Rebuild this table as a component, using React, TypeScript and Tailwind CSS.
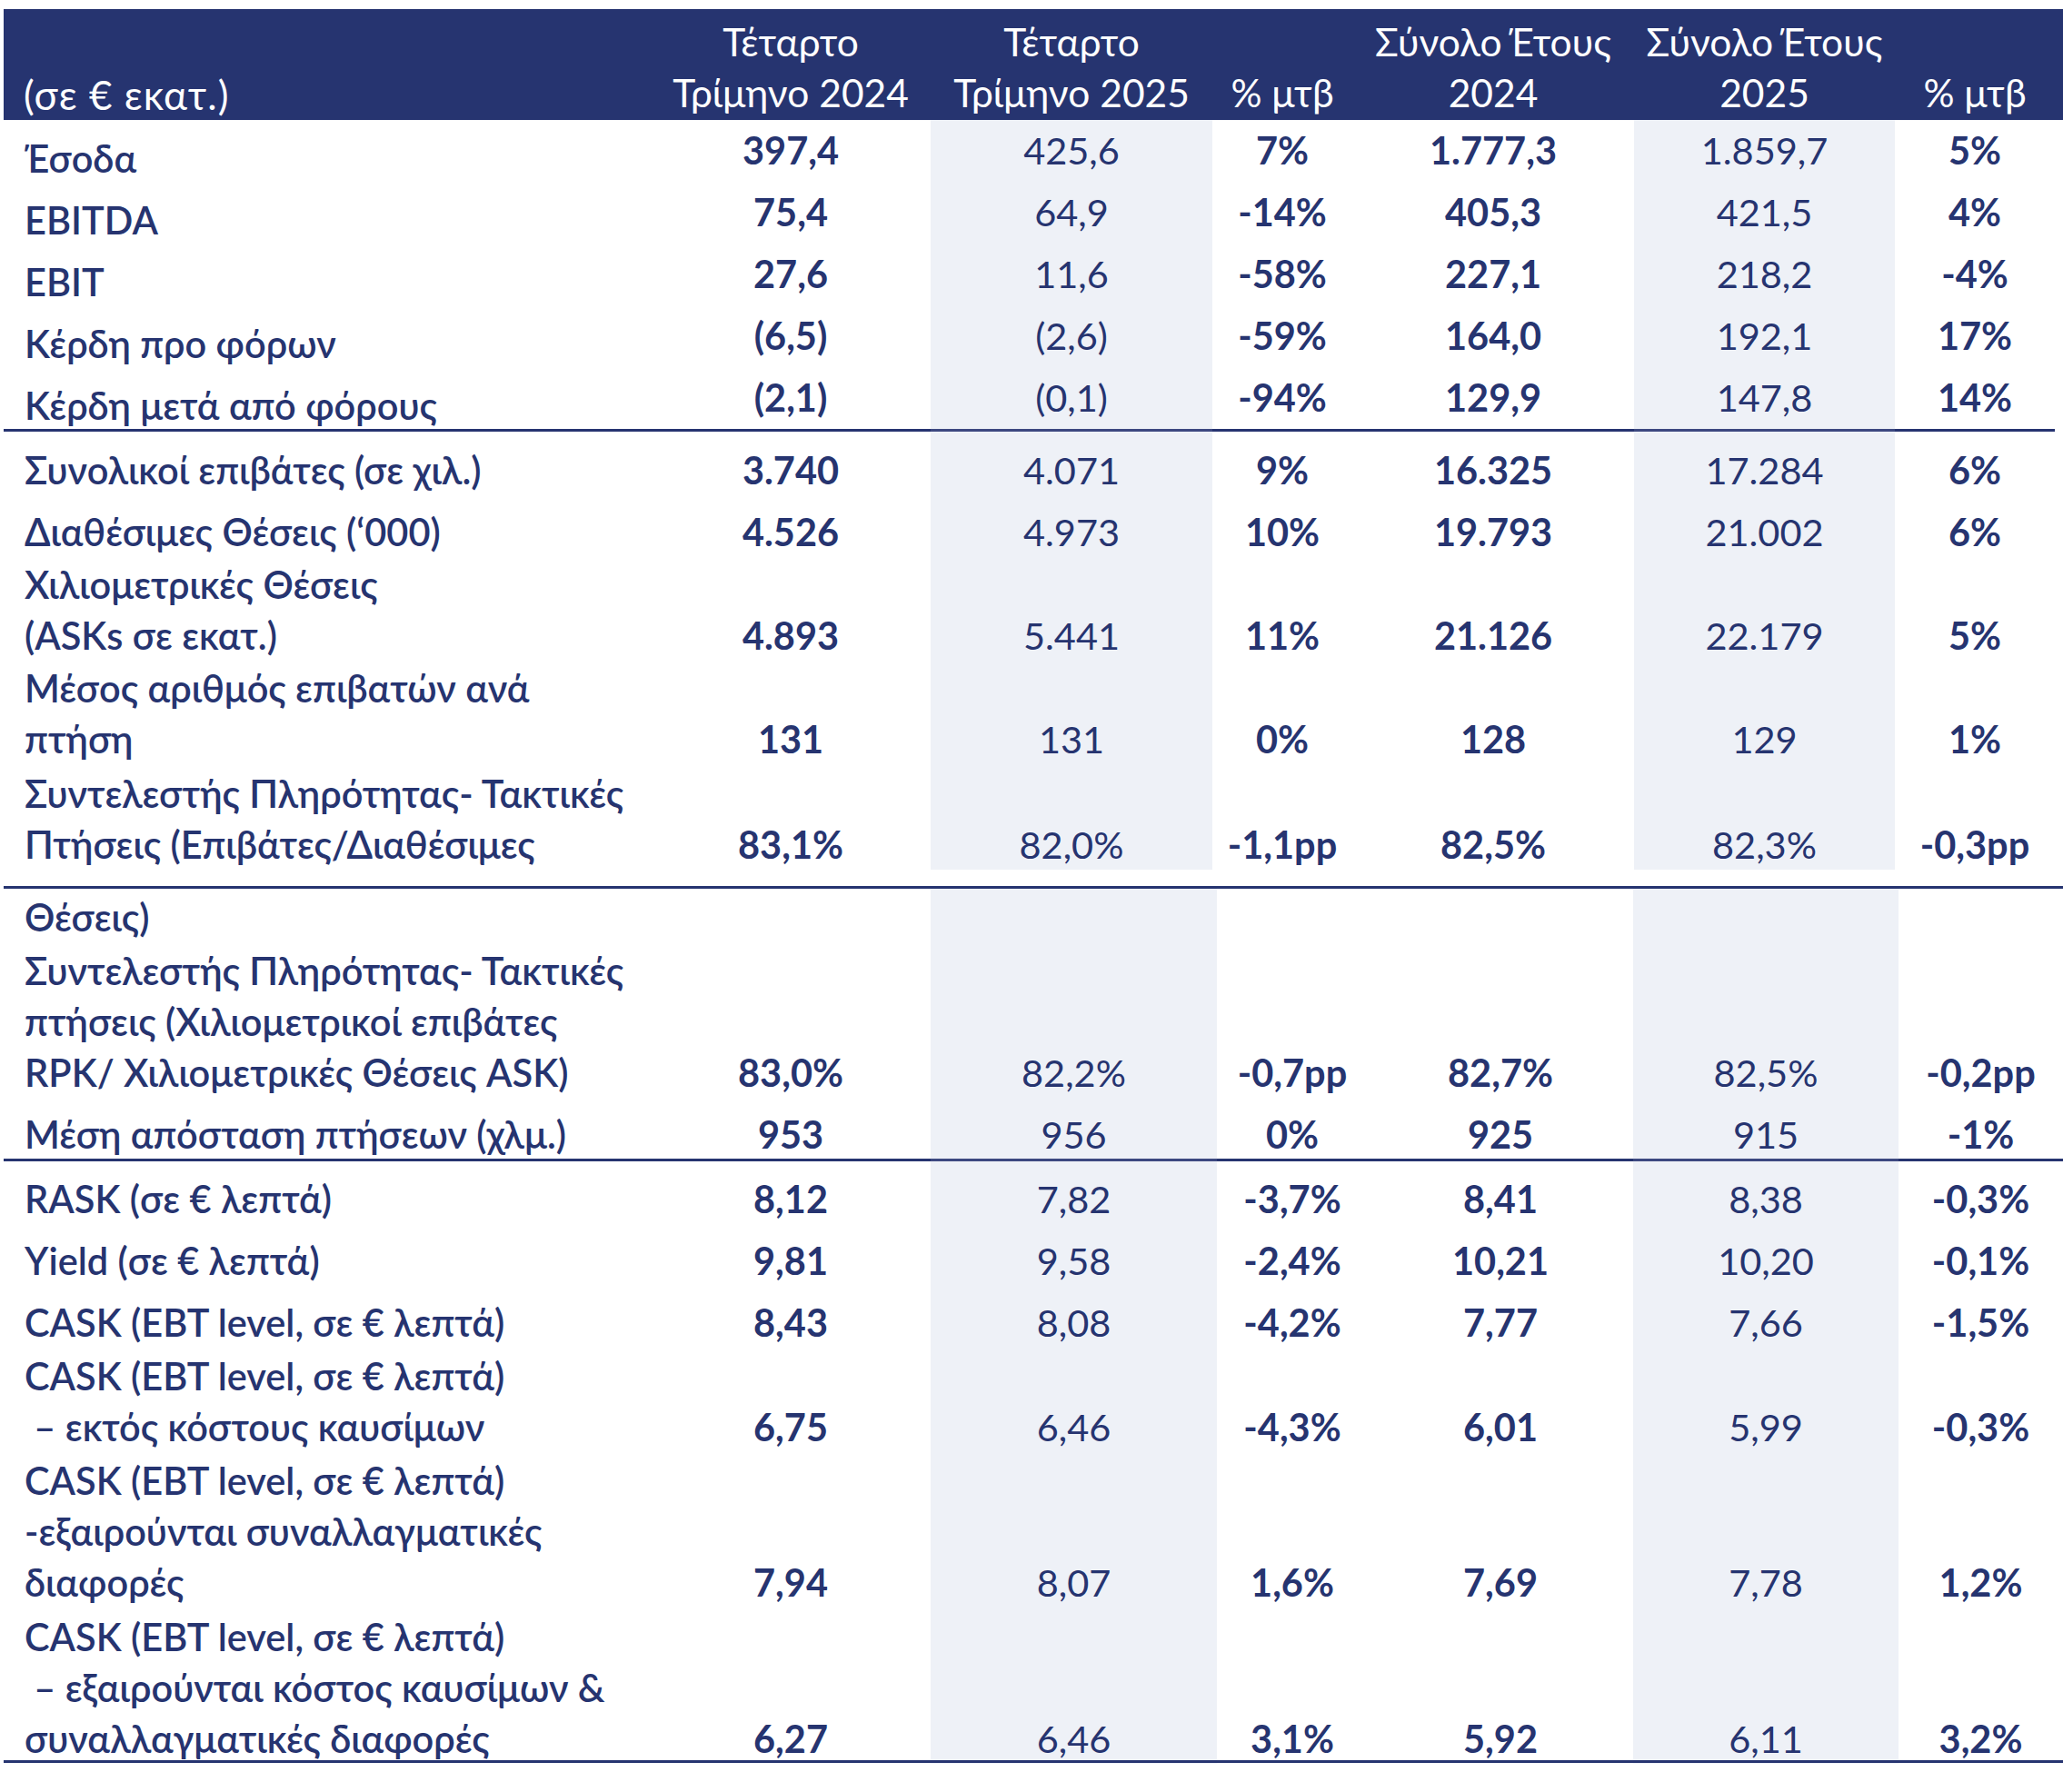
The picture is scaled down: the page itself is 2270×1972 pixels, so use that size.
const FONT = "font-['Lato','Noto_Sans',sans-serif]";
const COLS1 = "grid-cols-[712px_308px_310px_154px_310px_287px_176px]";
const COLS2 = "grid-cols-[712px_308px_315px_166px_292px_292px_181px]";

type Row = {
  label: string[];
  vals?: string[];
  h: string; // row height class
  pt: string; // label padding-top class
  vpt: string; // values padding-top class
};

const part1a: Row[] = [
  { label: ["Έσοδα"], vals: ["397,4", "425,6", "7%", "1.777,3", "1.859,7", "5%"], h: "h-[68px]", pt: "pt-[14px]", vpt: "pt-[5px]" },
  { label: ["EBITDA"], vals: ["75,4", "64,9", "-14%", "405,3", "421,5", "4%"], h: "h-[68px]", pt: "pt-[14px]", vpt: "pt-[5px]" },
  { label: ["EBIT"], vals: ["27,6", "11,6", "-58%", "227,1", "218,2", "-4%"], h: "h-[68px]", pt: "pt-[14px]", vpt: "pt-[5px]" },
  { label: ["Κέρδη προ φόρων"], vals: ["(6,5)", "(2,6)", "-59%", "164,0", "192,1", "17%"], h: "h-[68px]", pt: "pt-[14px]", vpt: "pt-[5px]" },
  { label: ["Κέρδη μετά από φόρους"], vals: ["(2,1)", "(0,1)", "-94%", "129,9", "147,8", "14%"], h: "h-[68px]", pt: "pt-[14px]", vpt: "pt-[5px]" },
];

const part1b: Row[] = [
  { label: ["Συνολικοί επιβάτες (σε χιλ.)"], vals: ["3.740", "4.071", "9%", "16.325", "17.284", "6%"], h: "h-[68px]", pt: "pt-[14px]", vpt: "pt-[14px]" },
  { label: ["Διαθέσιμες Θέσεις (‘000)"], vals: ["4.526", "4.973", "10%", "19.793", "21.002", "6%"], h: "h-[68px]", pt: "pt-[14px]", vpt: "pt-[14px]" },
  { label: ["Χιλιομετρικές Θέσεις", "(ASKs σε εκατ.)"], vals: ["4.893", "5.441", "11%", "21.126", "22.179", "5%"], h: "h-[116px]", pt: "pt-[4px]", vpt: "pt-[60px]" },
  { label: ["Μέσος αριθμός επιβατών ανά", "πτήση"], vals: ["131", "131", "0%", "128", "129", "1%"], h: "h-[116px]", pt: "pt-[2px]", vpt: "pt-[58px]" },
  { label: ["Συντελεστής Πληρότητας- Τακτικές", "Πτήσεις (Επιβάτες/Διαθέσιμες"], vals: ["83,1%", "82,0%", "-1,1pp", "82,5%", "82,3%", "-0,3pp"], h: "h-[112px]", pt: "pt-[2px]", vpt: "pt-[58px]" },
];

const part2: Row[] = [
  { label: ["Θέσεις)"], h: "h-[60px]", pt: "pt-[3px]", vpt: "pt-[3px]" },
  { label: ["Συντελεστής Πληρότητας- Τακτικές", "πτήσεις (Χιλιομετρικοί επιβάτες", "RPK/ Χιλιομετρικές Θέσεις ASK)"], vals: ["83,0%", "82,2%", "-0,7pp", "82,7%", "82,5%", "-0,2pp"], h: "h-[170px]", pt: "pt-[2px]", vpt: "pt-[114px]" },
  { label: ["Μέση απόσταση πτήσεων (χλμ.)"], vals: ["953", "956", "0%", "925", "915", "-1%"], h: "h-[67px]", pt: "pt-[12px]", vpt: "pt-[12px]" },
];

const part3: Row[] = [
  { label: ["RASK (σε € λεπτά)"], vals: ["8,12", "7,82", "-3,7%", "8,41", "8,38", "-0,3%"], h: "h-[68px]", pt: "pt-[13px]", vpt: "pt-[13px]" },
  { label: ["Yield (σε € λεπτά)"], vals: ["9,81", "9,58", "-2,4%", "10,21", "10,20", "-0,1%"], h: "h-[68px]", pt: "pt-[13px]", vpt: "pt-[13px]" },
  { label: ["CASK (EBT level, σε € λεπτά)"], vals: ["8,43", "8,08", "-4,2%", "7,77", "7,66", "-1,5%"], h: "h-[70px]", pt: "pt-[13px]", vpt: "pt-[13px]" },
  { label: ["CASK (EBT level, σε € λεπτά)", "\u00a0– εκτός κόστους καυσίμων"], vals: ["6,75", "6,46", "-4,3%", "6,01", "5,99", "-0,3%"], h: "h-[115px]", pt: "pt-[2px]", vpt: "pt-[58px]" },
  { label: ["CASK (EBT level, σε € λεπτά)", "-εξαιρούνται συναλλαγματικές", "διαφορές"], vals: ["7,94", "8,07", "1,6%", "7,69", "7,78", "1,2%"], h: "h-[172px]", pt: "pt-[2px]", vpt: "pt-[114px]" },
  { label: ["CASK (EBT level, σε € λεπτά)", "\u00a0– εξαιρούνται κόστος καυσίμων &", "συναλλαγματικές διαφορές"], vals: ["6,27", "6,46", "3,1%", "5,92", "6,11", "3,2%"], h: "h-[166px]", pt: "pt-[2px]", vpt: "pt-[114px]" },
];

// shaded columns: Q4 2025 (index 1 of values) and FY 2025 (index 4)
const SHADED = [1, 4];

function TableRow({ row, cols }: { row: Row; cols: string }) {
  const vals = row.vals ?? ["", "", "", "", "", ""];
  return (
    <div className={`grid ${cols} ${row.h}`}>
      <div className={`pl-[23px] ${row.pt} leading-[56px] font-semibold whitespace-nowrap`}>
        {row.label.map((l, i) => (
          <div key={i}>{l}</div>
        ))}
      </div>
      {vals.map((v, i) => {
        const shaded = SHADED.includes(i);
        return (
          <div
            key={i}
            className={`text-center ${row.vpt} leading-[56px] whitespace-nowrap ${
              shaded ? "bg-[#eef1f7] font-normal" : "font-bold"
            }`}
          >
            {v}
          </div>
        );
      })}
    </div>
  );
}

function Divider({ cols, solid }: { cols: string; solid?: boolean }) {
  return (
    <div className={`grid ${cols} h-[3px]`}>
      {[0, 1, 2, 3, 4, 5, 6].map((i) => (
        <div
          key={i}
          className={!solid && (i === 2 || i === 5) ? "bg-[#3c4880]" : "bg-[#263470]"}
        />
      ))}
    </div>
  );
}

export default function App() {
  return (
    <div className={`w-[2270px] h-[1972px] bg-white pt-[10px] pl-[4px] text-[41.5px] text-[#263470] ${FONT}`}>
      {/* Header */}
      <div className={`grid ${COLS1} h-[122px] bg-[#263470] text-white text-[42.5px] leading-[56px]`}>
        <div className="pl-[22px] pt-[66px] text-[44px] tracking-[1px] whitespace-nowrap">(σε € εκατ.)</div>
        <div className="pt-[8px] text-center whitespace-nowrap">
          <div>Τέταρτο</div>
          <div>Τρίμηνο 2024</div>
        </div>
        <div className="pt-[8px] text-center whitespace-nowrap">
          <div>Τέταρτο</div>
          <div>Τρίμηνο 2025</div>
        </div>
        <div className="pt-[64px] text-center whitespace-nowrap">% μτβ</div>
        <div className="pt-[8px] text-center whitespace-nowrap">
          <div>Σύνολο Έτους</div>
          <div>2024</div>
        </div>
        <div className="pt-[8px] text-center whitespace-nowrap">
          <div>Σύνολο Έτους</div>
          <div>2025</div>
        </div>
        <div className="pt-[64px] text-center whitespace-nowrap">% μτβ</div>
      </div>

      {part1a.map((r, i) => (
        <TableRow key={i} row={r} cols={COLS1} />
      ))}
      <Divider cols={COLS1} />
      {part1b.map((r, i) => (
        <TableRow key={i} row={r} cols={COLS1} />
      ))}

      <div className="h-[20px]" />
      <Divider cols={COLS2} solid />

      {part2.map((r, i) => (
        <TableRow key={i} row={r} cols={COLS2} />
      ))}
      <Divider cols={COLS2} />
      {part3.map((r, i) => (
        <TableRow key={i} row={r} cols={COLS2} />
      ))}
      <Divider cols={COLS2} solid />
    </div>
  );
}
